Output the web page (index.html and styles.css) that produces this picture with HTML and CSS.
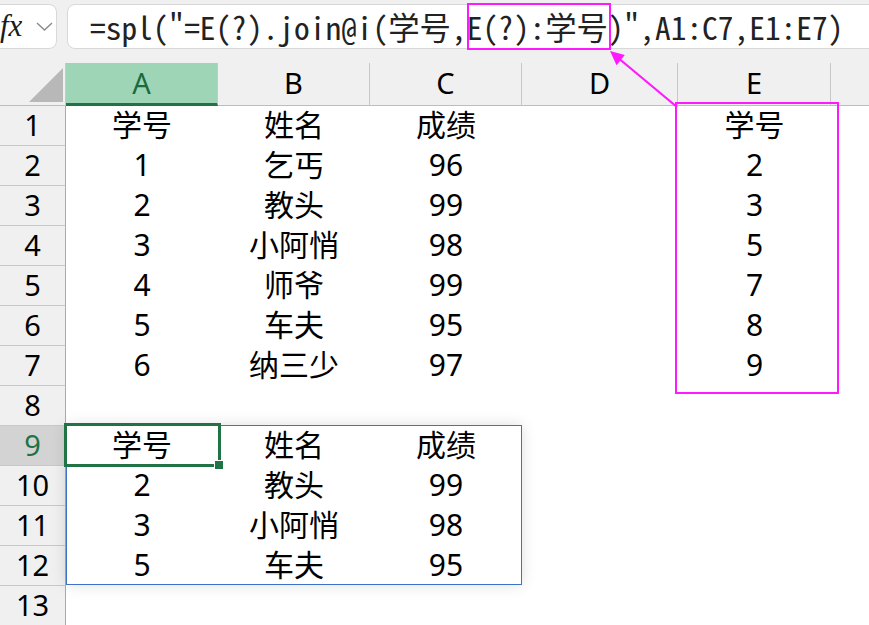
FILE: index.html
```html
<!DOCTYPE html>
<html lang="zh-CN">
<head>
  <meta charset="UTF-8">
  <title>spl 公式 - 工作表</title>
  <link rel="stylesheet" href="styles.css">
</head>
<body>
<div class="page">

  <!-- Formula bar -->
  <div class="toolbar">
    <div class="fx-box">
      <span class="fx">fx</span>
      <svg class="chevron" width="17" height="9" viewBox="0 0 17 9"><polyline points="1,1 8.5,8 16,1" fill="none" stroke="#8a8a8a" stroke-width="1.4"/></svg>
    </div>
    <div class="formula">=spl("=E(?).join@i(学号,E(?):学号)",A1:C7,E1:E7)</div>
  </div>

  <!-- Sheet grid -->
  <div class="sheet">
    <div class="row head">
      <div class="corner"><span class="tri"></span></div>
      <div class="ch active">A</div>
      <div class="ch">B</div>
      <div class="ch">C</div>
      <div class="ch">D</div>
      <div class="ch">E</div>
      <div class="ch last"></div>
    </div>
    <div class="row"><div class="rh">1</div><div class="c">学号</div><div class="c">姓名</div><div class="c">成绩</div><div class="c"></div><div class="c">学号</div><div class="c"></div></div>
    <div class="row"><div class="rh">2</div><div class="c">1</div><div class="c">乞丐</div><div class="c">96</div><div class="c"></div><div class="c">2</div><div class="c"></div></div>
    <div class="row"><div class="rh">3</div><div class="c">2</div><div class="c">教头</div><div class="c">99</div><div class="c"></div><div class="c">3</div><div class="c"></div></div>
    <div class="row"><div class="rh">4</div><div class="c">3</div><div class="c">小阿悄</div><div class="c">98</div><div class="c"></div><div class="c">5</div><div class="c"></div></div>
    <div class="row"><div class="rh">5</div><div class="c">4</div><div class="c">师爷</div><div class="c">99</div><div class="c"></div><div class="c">7</div><div class="c"></div></div>
    <div class="row"><div class="rh">6</div><div class="c">5</div><div class="c">车夫</div><div class="c">95</div><div class="c"></div><div class="c">8</div><div class="c"></div></div>
    <div class="row"><div class="rh">7</div><div class="c">6</div><div class="c">纳三少</div><div class="c">97</div><div class="c"></div><div class="c">9</div><div class="c"></div></div>
    <div class="row"><div class="rh">8</div><div class="c"></div><div class="c"></div><div class="c"></div><div class="c"></div><div class="c"></div><div class="c"></div></div>
    <div class="row"><div class="rh selected">9</div><div class="c">学号</div><div class="c">姓名</div><div class="c">成绩</div><div class="c"></div><div class="c"></div><div class="c"></div></div>
    <div class="row"><div class="rh">10</div><div class="c">2</div><div class="c">教头</div><div class="c">99</div><div class="c"></div><div class="c"></div><div class="c"></div></div>
    <div class="row"><div class="rh">11</div><div class="c">3</div><div class="c">小阿悄</div><div class="c">98</div><div class="c"></div><div class="c"></div><div class="c"></div></div>
    <div class="row"><div class="rh">12</div><div class="c">5</div><div class="c">车夫</div><div class="c">95</div><div class="c"></div><div class="c"></div><div class="c"></div></div>
    <div class="row"><div class="rh">13</div><div class="c"></div><div class="c"></div><div class="c"></div><div class="c"></div><div class="c"></div><div class="c"></div></div>
  </div>

  <!-- Overlays: spill range, active cell, annotation marks -->
  <div class="spill"></div>
  <div class="active-cell"><span class="handle"></span></div>
  <div class="mark mark-formula"></div>
  <div class="mark mark-result"></div>
  <svg class="arrow" width="869" height="625" viewBox="0 0 869 625">
    <line x1="677" y1="107" x2="617" y2="57" stroke="#ff19ff" stroke-width="2.2"/>
    <polygon points="610,51 624.8,55 616.5,65.2" fill="#ff19ff"/>
  </svg>

</div>
</body>
</html>
```
FILE: styles.css
```css
/* General */
body {
  margin: 0;
  background: #fff;
  font-family: "Noto Sans", "Noto Sans CJK SC", sans-serif;
  color: #000;
  overflow: hidden;
}
.page {
  position: relative;
  width: 869px;
  height: 625px;
  overflow: hidden;
}

/* Formula bar */
.toolbar {
  height: 63px;
  background: #f0f0f0;
  display: flex;
  align-items: flex-start;
  padding-top: 4px;
  box-sizing: border-box;
}
.fx-box {
  margin-left: -10px;
  width: 67px;
  height: 45px;
  box-sizing: border-box;
  background: #fff;
  border: 1px solid #d8d8d8;
  border-radius: 8px;
  display: flex;
  align-items: center;
  padding-left: 9px;
}
.fx {
  font-family: "Liberation Serif", serif;
  font-style: italic;
  font-size: 31px;
  line-height: 31px;
  color: #1a1a1a;
  margin-top: -2px;
}
.chevron {
  margin-left: 14px;
}
.formula {
  margin-left: 10px;
  margin-right: -12px;
  flex: 1;
  height: 45px;
  box-sizing: border-box;
  background: #fff;
  border: 1px solid #d8d8d8;
  border-radius: 8px;
  padding-left: 22px;
  font-family: "Noto Sans Mono CJK SC", "DejaVu Sans Mono", monospace;
  font-size: 31.4px;
  line-height: 43px;
  color: #222;
  white-space: nowrap;
}

/* Sheet */
.row {
  display: grid;
  grid-template-columns: 66px 152px 152px 152px 156px 153px 1fr;
  height: 40px;
}
.row.head {
  height: 43px;
}
.corner {
  background: #f0f0f0;
  border-right: 1px solid #c8c8c8;
  border-bottom: 1px solid #bdbdbd;
  position: relative;
}
.tri {
  position: absolute;
  right: 2px;
  bottom: 3px;
  width: 0;
  height: 0;
  border-left: 34px solid transparent;
  border-bottom: 34px solid #b8b8b8;
}
.ch {
  background: #f0f0f0;
  border-right: 1px solid #c8c8c8;
  border-bottom: 1px solid #bdbdbd;
  font-size: 29px;
  line-height: 40px;
  text-align: center;
  box-sizing: border-box;
}
.ch.active {
  background: #9fd5b7;
  color: #1a6b3e;
  border-bottom: 3px solid #217346;
}
.ch.last {
  border-right: none;
}
.rh {
  background: #f0f0f0;
  border-right: 1px solid #a9a9a9;
  border-bottom: 1px solid #c8c8c8;
  font-size: 29px;
  line-height: 37px;
  text-align: center;
  box-sizing: border-box;
}
.rh.selected {
  background: #d3d3d3;
  color: #217346;
}
.c {
  font-size: 30px;
  line-height: 37px;
  text-align: center;
  white-space: nowrap;
}

/* Overlays */
.spill {
  position: absolute;
  left: 66px;
  top: 425px;
  width: 456px;
  height: 160px;
  box-sizing: border-box;
  border: 1px solid #3d72c6;
  box-shadow: 0 0 14px rgba(0, 0, 0, 0.13);
}
.active-cell {
  position: absolute;
  left: 64px;
  top: 423px;
  width: 157px;
  height: 44px;
  box-sizing: border-box;
  border: 3px solid #217346;
}
.handle {
  position: absolute;
  right: -6px;
  bottom: -6px;
  width: 8px;
  height: 8px;
  background: #217346;
  border: 1px solid #fff;
}
.mark {
  position: absolute;
  box-sizing: border-box;
  border: 2px solid #ff19ff;
}
.mark-formula {
  left: 467px;
  top: 3px;
  width: 144px;
  height: 47px;
}
.mark-result {
  left: 675px;
  top: 102px;
  width: 164px;
  height: 292px;
  border-width: 2.5px;
}
.arrow {
  position: absolute;
  left: 0;
  top: 0;
  pointer-events: none;
}
```
